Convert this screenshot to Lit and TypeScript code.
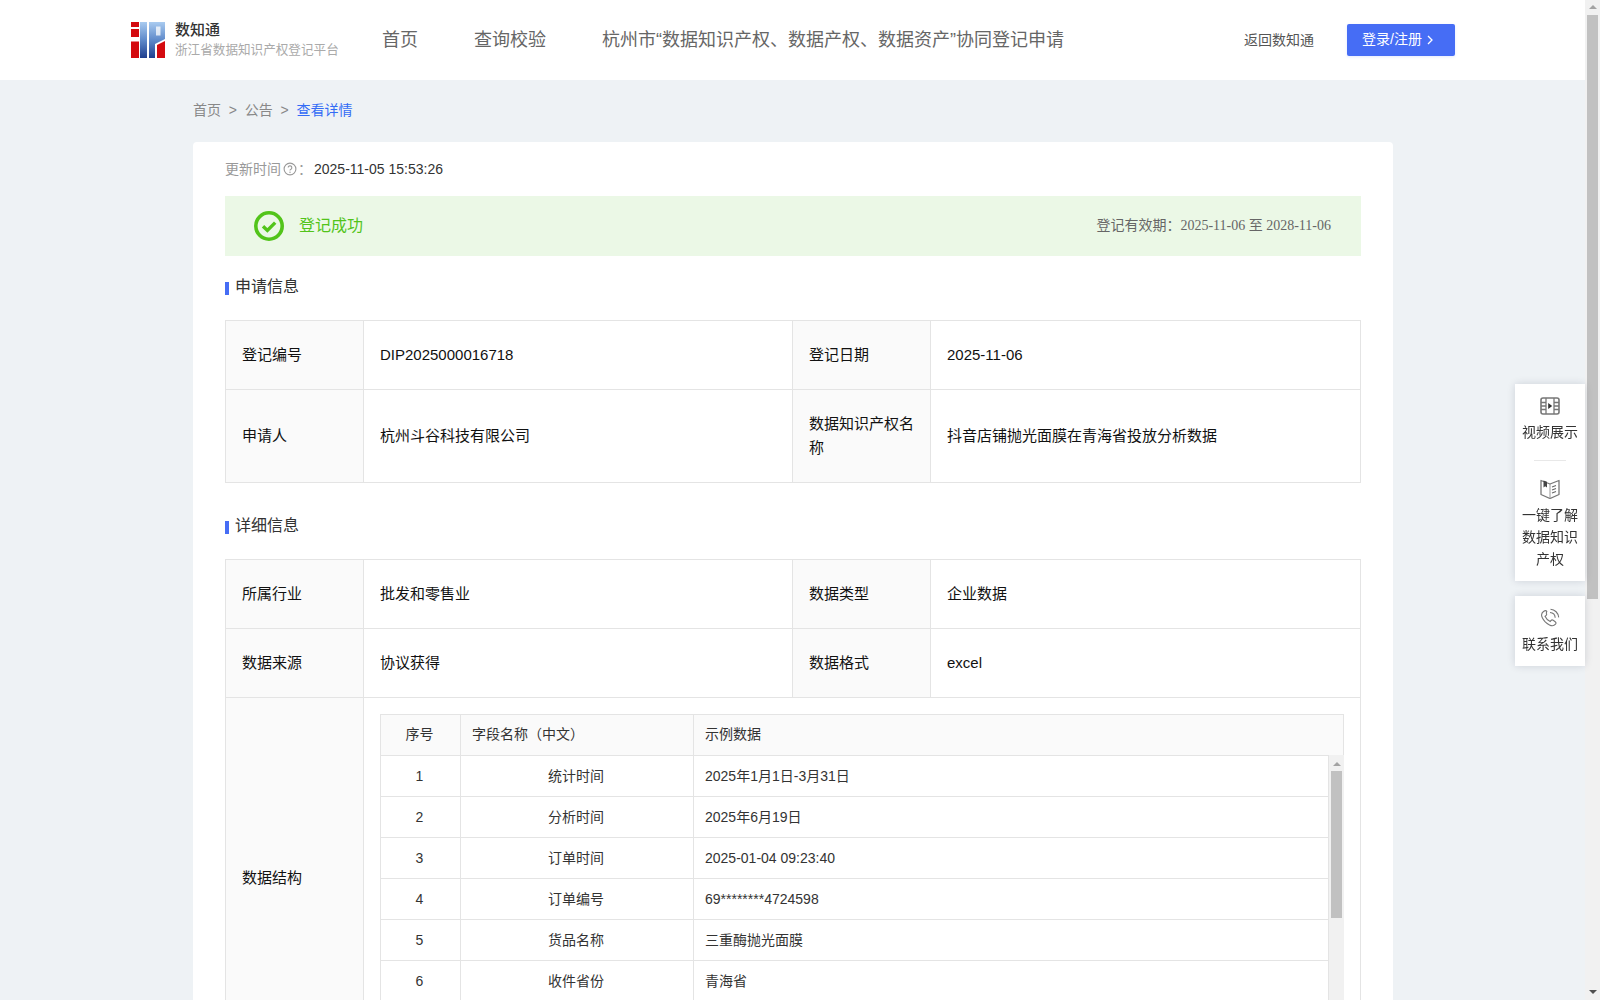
import { LitElement, html, css } from "lit";
import { customElement } from "lit/decorators.js";

const fieldRows = [
  ["1", "统计时间", "2025年1月1日-3月31日"],
  ["2", "分析时间", "2025年6月19日"],
  ["3", "订单时间", "2025-01-04 09:23:40"],
  ["4", "订单编号", "69********4724598"],
  ["5", "货品名称", "三重酶抛光面膜"],
  ["6", "收件省份", "青海省"],
];

@customElement("app-root")
export class AppRoot extends LitElement {
  static styles = css`
    :host {
      display: flex;
      height: 100vh;
      overflow: hidden;
      font-family: "Liberation Sans", "Noto Sans CJK SC", sans-serif;
      font-size: 14px;
      color: #333;
      background: #eef2f5;
    }
    .page {
      flex: 1;
      min-width: 0;
      height: 100%;
      overflow: hidden;
    }
    .page-bar {
      width: 15px;
      flex: none;
      background: #f1f1f1;
      display: flex;
      flex-direction: column;
      align-items: center;
      position: relative;
    }
    .thumb {
      width: 11px;
      background: #c1c1c1;
    }
    .page-bar .thumb {
      margin-top: 15px;
      height: 584px;
    }
    .arrow-up {
      position: absolute;
      top: 5px;
      width: 0;
      height: 0;
      border-left: 4px solid transparent;
      border-right: 4px solid transparent;
      border-bottom: 4px solid #a3a3a3;
    }
    .arrow-down {
      position: absolute;
      bottom: 6px;
      width: 0;
      height: 0;
      border-left: 4px solid transparent;
      border-right: 4px solid transparent;
      border-top: 4px solid #505050;
    }

    header {
      height: 80px;
      background: #fff;
      display: flex;
      align-items: center;
      padding: 0 130px 0 131px;
    }
    .logo {
      width: 34px;
      height: 36px;
      flex: none;
      margin-right: 10px;
    }
    .brand {
      width: 207px;
      flex: none;
      white-space: nowrap;
    }
    .brand b {
      display: block;
      font-size: 15px;
      line-height: 20px;
      color: #333;
      font-weight: 500;
    }
    .brand span {
      display: block;
      font-size: 12.6px;
      line-height: 20px;
      color: #aaa;
    }
    nav {
      display: flex;
      gap: 56px;
      font-size: 18px;
      color: #666;
      white-space: nowrap;
      padding-bottom: 4px;
    }
    .head-right {
      margin-left: auto;
      display: flex;
      align-items: center;
      gap: 33px;
      color: #555;
    }
    .head-right > span {
      padding-bottom: 2px;
    }
    .login {
      width: 108px;
      height: 32px;
      box-sizing: border-box;
      padding: 0 0 4px 15px;
      display: flex;
      align-items: center;
      gap: 5px;
      background: #466df5;
      color: #fff;
      border-radius: 2px;
      box-shadow: 0 1px 3px rgba(70, 109, 245, 0.15);
    }
    .login svg {
      width: 6px;
      height: 10px;
      margin-top: 4px;
    }

    main {
      width: 1200px;
      margin-left: 193px;
    }
    .crumbs {
      height: 62px;
      box-sizing: border-box;
      padding-top: 20px;
      line-height: 20px;
      color: #888;
      display: flex;
    }
    .crumbs i {
      font-style: normal;
      margin: 0 7.8px;
    }
    .crumbs .now {
      color: #336cf5;
    }
    .card {
      background: #fff;
      border-radius: 4px;
      padding: 17px 32px 0;
    }
    .updated {
      display: flex;
      align-items: center;
      line-height: 20px;
      color: #999;
    }
    .updated svg {
      width: 14px;
      height: 14px;
      margin-left: 2px;
    }
    .updated .stamp {
      color: #333;
    }
    .updated .colon {
      width: 17px;
      padding-left: 1px;
      box-sizing: border-box;
    }
    .status {
      margin-top: 17px;
      height: 60px;
      background: #ebf8e6;
      display: flex;
      align-items: center;
      padding: 0 30px 0 29px;
    }
    .status svg {
      width: 30px;
      height: 30px;
      margin-right: 15px;
    }
    .status .ok {
      font-size: 16px;
      color: #52c41a;
      padding-bottom: 4px;
    }
    .status .valid {
      margin-left: auto;
      color: #666;
      padding-bottom: 5px;
    }
    .status .valid em {
      font-family: "Liberation Serif", "Noto Sans CJK SC", serif;
      font-style: normal;
    }
    h3 {
      margin: 20px 0 22px;
      height: 22px;
      display: flex;
      align-items: center;
      gap: 6px;
      font-size: 16px;
      font-weight: 400;
      line-height: 22px;
      color: #333;
    }
    h3::before {
      content: "";
      width: 4px;
      height: 13px;
      margin-top: 3px;
      background: #466df5;
    }
    h3.second {
      margin: 32px 0 22px;
    }
    table {
      border-collapse: collapse;
      table-layout: fixed;
    }
    .info {
      width: 1136px;
      color: #111;
      font-size: 15px;
    }
    .info > tbody > tr > td {
      border: 1px solid #e4e4e4;
      padding: 22px 16px;
      line-height: 24px;
    }
    .info col.key {
      width: 138px;
    }
    .info col.val {
      width: 429px;
    }
    .info > tbody > tr > td.label {
      background: #fafafa;
    }
    .info > tbody > tr > td.nest {
      padding: 16px;
    }
    .fields {
      color: #333;
      font-size: 14px;
    }
    .fields col.no {
      width: 80px;
    }
    .fields col.name {
      width: 233px;
    }
    .fields td {
      border: 1px solid #e4e4e4;
      height: 20px;
      padding: 10px 13px 10px 11px;
      line-height: 20px;
    }
    .fields .c {
      text-align: center;
    }
    .fields-head {
      width: 964px;
    }
    .fields-head td {
      background: #fafafa;
      padding-top: 9px;
      padding-bottom: 11px;
    }
    .fields-body {
      display: flex;
      align-items: stretch;
      height: 287px;
      margin-top: -1px;
    }
    .fields-body table {
      width: 949px;
      flex: none;
      align-self: flex-start;
    }
    .mini-bar {
      width: 15px;
      flex: none;
      background: #f1f1f1;
      display: flex;
      flex-direction: column;
      align-items: center;
      position: relative;
    }
    .mini-bar .thumb {
      margin-top: 16px;
      height: 147px;
    }
    .mini-bar .arrow-up {
      top: 7px;
    }

    aside {
      position: fixed;
      right: 15px;
      top: 384px;
      width: 70px;
      display: flex;
      flex-direction: column;
      gap: 15px;
    }
    .tool {
      background: #fff;
      box-shadow: 0 0 8px rgba(0, 20, 60, 0.14);
      text-align: center;
      color: #333;
      line-height: 22px;
      padding: 12px 7px 11px;
    }
    .tool svg {
      display: block;
      width: 20px;
      height: 20px;
      margin: 0 auto 5px;
    }
    .tool hr {
      border: 0;
      height: 1px;
      width: 32px;
      background: #e8e8e8;
      margin: 17px auto 18px;
    }
  `;

  renderLogo() {
    return html`<svg class="logo" viewBox="0 0 34 36">
      <defs>
        <linearGradient id="lg" x1="0" y1="0" x2="0" y2="1">
          <stop offset="0" stop-color="#a9cbf0" />
          <stop offset="0.5" stop-color="#5f8aca" />
          <stop offset="1" stop-color="#1f3f8f" />
        </linearGradient>
      </defs>
      <path fill="#d40a0f" d="M0 0h8v5H0zM0 7h8v8H0zM0 19.500h8V36H0z" />
      <path fill="url(#lg)" d="M9 0h7v36H9zM18 0h16v17l-10 5v14h-6z" />
      <path fill="#fff" fill-opacity=".75" d="M25 4.500v9h4.500v-9z" />
      <path fill="#d40a0f" d="M26 36V23l8-4v17z" />
    </svg>`;
  }

  renderFieldRows() {
    return fieldRows.map(
      (r) => html`<tr>
        <td class="c">${r[0]}</td>
        <td class="c">${r[1]}</td>
        <td>${r[2]}</td>
      </tr>`
    );
  }

  render() {
    return html`
      <div class="page">
        <header>
          ${this.renderLogo()}
          <div class="brand">
            <b>数知通</b>
            <span>浙江省数据知识产权登记平台</span>
          </div>
          <nav>
            <span>首页</span>
            <span>查询校验</span>
            <span>杭州市“数据知识产权、数据产权、数据资产”协同登记申请</span>
          </nav>
          <div class="head-right">
            <span>返回数知通</span>
            <div class="login">
              登录/注册
              <svg viewBox="0 0 6 10"><path d="M1 1l4 4-4 4" fill="none" stroke="#fff" stroke-width="1.3" /></svg>
            </div>
          </div>
        </header>
        <main>
          <div class="crumbs">
            <span>首页</span><i>&gt;</i><span>公告</span><i>&gt;</i><span class="now">查看详情</span>
          </div>
          <div class="card">
            <div class="updated">
              更新时间
              <svg viewBox="0 0 14 14">
                <circle cx="7" cy="7" r="5.900" fill="none" stroke="#999" stroke-width="1.100" />
                <path d="M5.200 5.600a1.800 1.800 0 1 1 2.700 1.600c-.6.3-.9.7-.9 1.300" fill="none" stroke="#999" stroke-width="1.100" />
                <circle cx="7" cy="10.200" r=".7" fill="#999" />
              </svg>
              <span class="colon">：</span>
              <span class="stamp">2025-11-05 15:53:26</span>
            </div>
            <div class="status">
              <svg viewBox="0 0 30 30">
                <circle cx="15" cy="15" r="13.200" fill="none" stroke="#52c41a" stroke-width="3.600" />
                <path d="M9 15.200l4.400 4.200 7.800-7.800" fill="none" stroke="#52c41a" stroke-width="3.400" />
              </svg>
              <span class="ok">登记成功</span>
              <span class="valid">登记有效期：<em>2025-11-06 至 2028-11-06</em></span>
            </div>
            <h3>申请信息</h3>
            <table class="info">
              <colgroup><col class="key" /><col class="val" /><col class="key" /><col /></colgroup>
              <tbody>
                <tr>
                  <td class="label">登记编号</td>
                  <td>DIP2025000016718</td>
                  <td class="label">登记日期</td>
                  <td>2025-11-06</td>
                </tr>
                <tr>
                  <td class="label">申请人</td>
                  <td>杭州斗谷科技有限公司</td>
                  <td class="label">数据知识产权名称</td>
                  <td>抖音店铺抛光面膜在青海省投放分析数据</td>
                </tr>
              </tbody>
            </table>
            <h3 class="second">详细信息</h3>
            <table class="info">
              <colgroup><col class="key" /><col class="val" /><col class="key" /><col /></colgroup>
              <tbody>
                <tr>
                  <td class="label">所属行业</td>
                  <td>批发和零售业</td>
                  <td class="label">数据类型</td>
                  <td>企业数据</td>
                </tr>
                <tr>
                  <td class="label">数据来源</td>
                  <td>协议获得</td>
                  <td class="label">数据格式</td>
                  <td>excel</td>
                </tr>
                <tr>
                  <td class="label">数据结构</td>
                  <td class="nest" colspan="3">
                    <table class="fields fields-head">
                      <colgroup><col class="no" /><col class="name" /><col /></colgroup>
                      <tr>
                        <td class="c">序号</td>
                        <td>字段名称（中文）</td>
                        <td>示例数据</td>
                      </tr>
                    </table>
                    <div class="fields-body">
                      <table class="fields">
                        <colgroup><col class="no" /><col class="name" /><col /></colgroup>
                        ${this.renderFieldRows()}
                      </table>
                      <div class="mini-bar">
                        <div class="arrow-up"></div>
                        <div class="thumb"></div>
                      </div>
                    </div>
                  </td>
                </tr>
              </tbody>
            </table>
          </div>
        </main>
      </div>
      <div class="page-bar">
        <div class="arrow-up"></div>
        <div class="thumb"></div>
        <div class="arrow-down"></div>
      </div>
      <aside>
        <div class="tool">
          <svg viewBox="0 0 20 20">
            <rect x="1" y="2" width="18" height="16" rx="2" fill="none" stroke="#777" stroke-width="1.600" />
            <path d="M6 2v16M14 2v16M1 6.500h5M1 10h5M1 13.500h5M14 6.500h5M14 10h5M14 13.500h5" stroke="#777" stroke-width="1.300" fill="none" />
            <path d="M8.200 7l4 3-4 3z" fill="#333" />
          </svg>
          视频展示
          <hr />
          <svg viewBox="0 0 20 20">
            <path d="M1 1.500L10 5l9-3.500v14L10 19.500l-9-4z" fill="none" stroke="#777" stroke-width="1.300" stroke-linejoin="round" />
            <path d="M3.500 1.500l3.500 1.300v5.700L5.200 7.200 3.500 8.500z" fill="#444" />
            <path d="M10 5v14.500" fill="none" stroke="#999" stroke-width="1" />
            <path d="M12 8l4-1.500M12 11l4-1.500M12 14l4-1.500" fill="none" stroke="#666" stroke-width="1.100" />
          </svg>
          一键了解数据知识产权
        </div>
        <div class="tool">
          <svg viewBox="0 0 20 20">
            <path d="M3.500 3.500c-2 1.500-2.500 3.500-1.300 6 1.500 3.300 4 5.800 7.300 7.500 2.300 1.200 4.500 1 6-.8.800-1 .6-1.800-.3-2.500l-2-1.400c-.9-.6-1.600-.5-2.300.3l-.7.900c-2.300-1-4.200-3-5.200-5.200l1-.8c.8-.7.900-1.400.3-2.300L6.800 3.300c-.8-1-2.200-.6-3.300.2z" fill="none" stroke="#777" stroke-width="1.100" />
            <path d="M10 4.500c2.800.2 5 2.300 5.200 5.200M10.500 1.200c4.300.3 7.900 3.800 8.200 8.200" fill="none" stroke="#777" stroke-width="1.100" />
          </svg>
          联系我们
        </div>
      </aside>
    `;
  }
}
